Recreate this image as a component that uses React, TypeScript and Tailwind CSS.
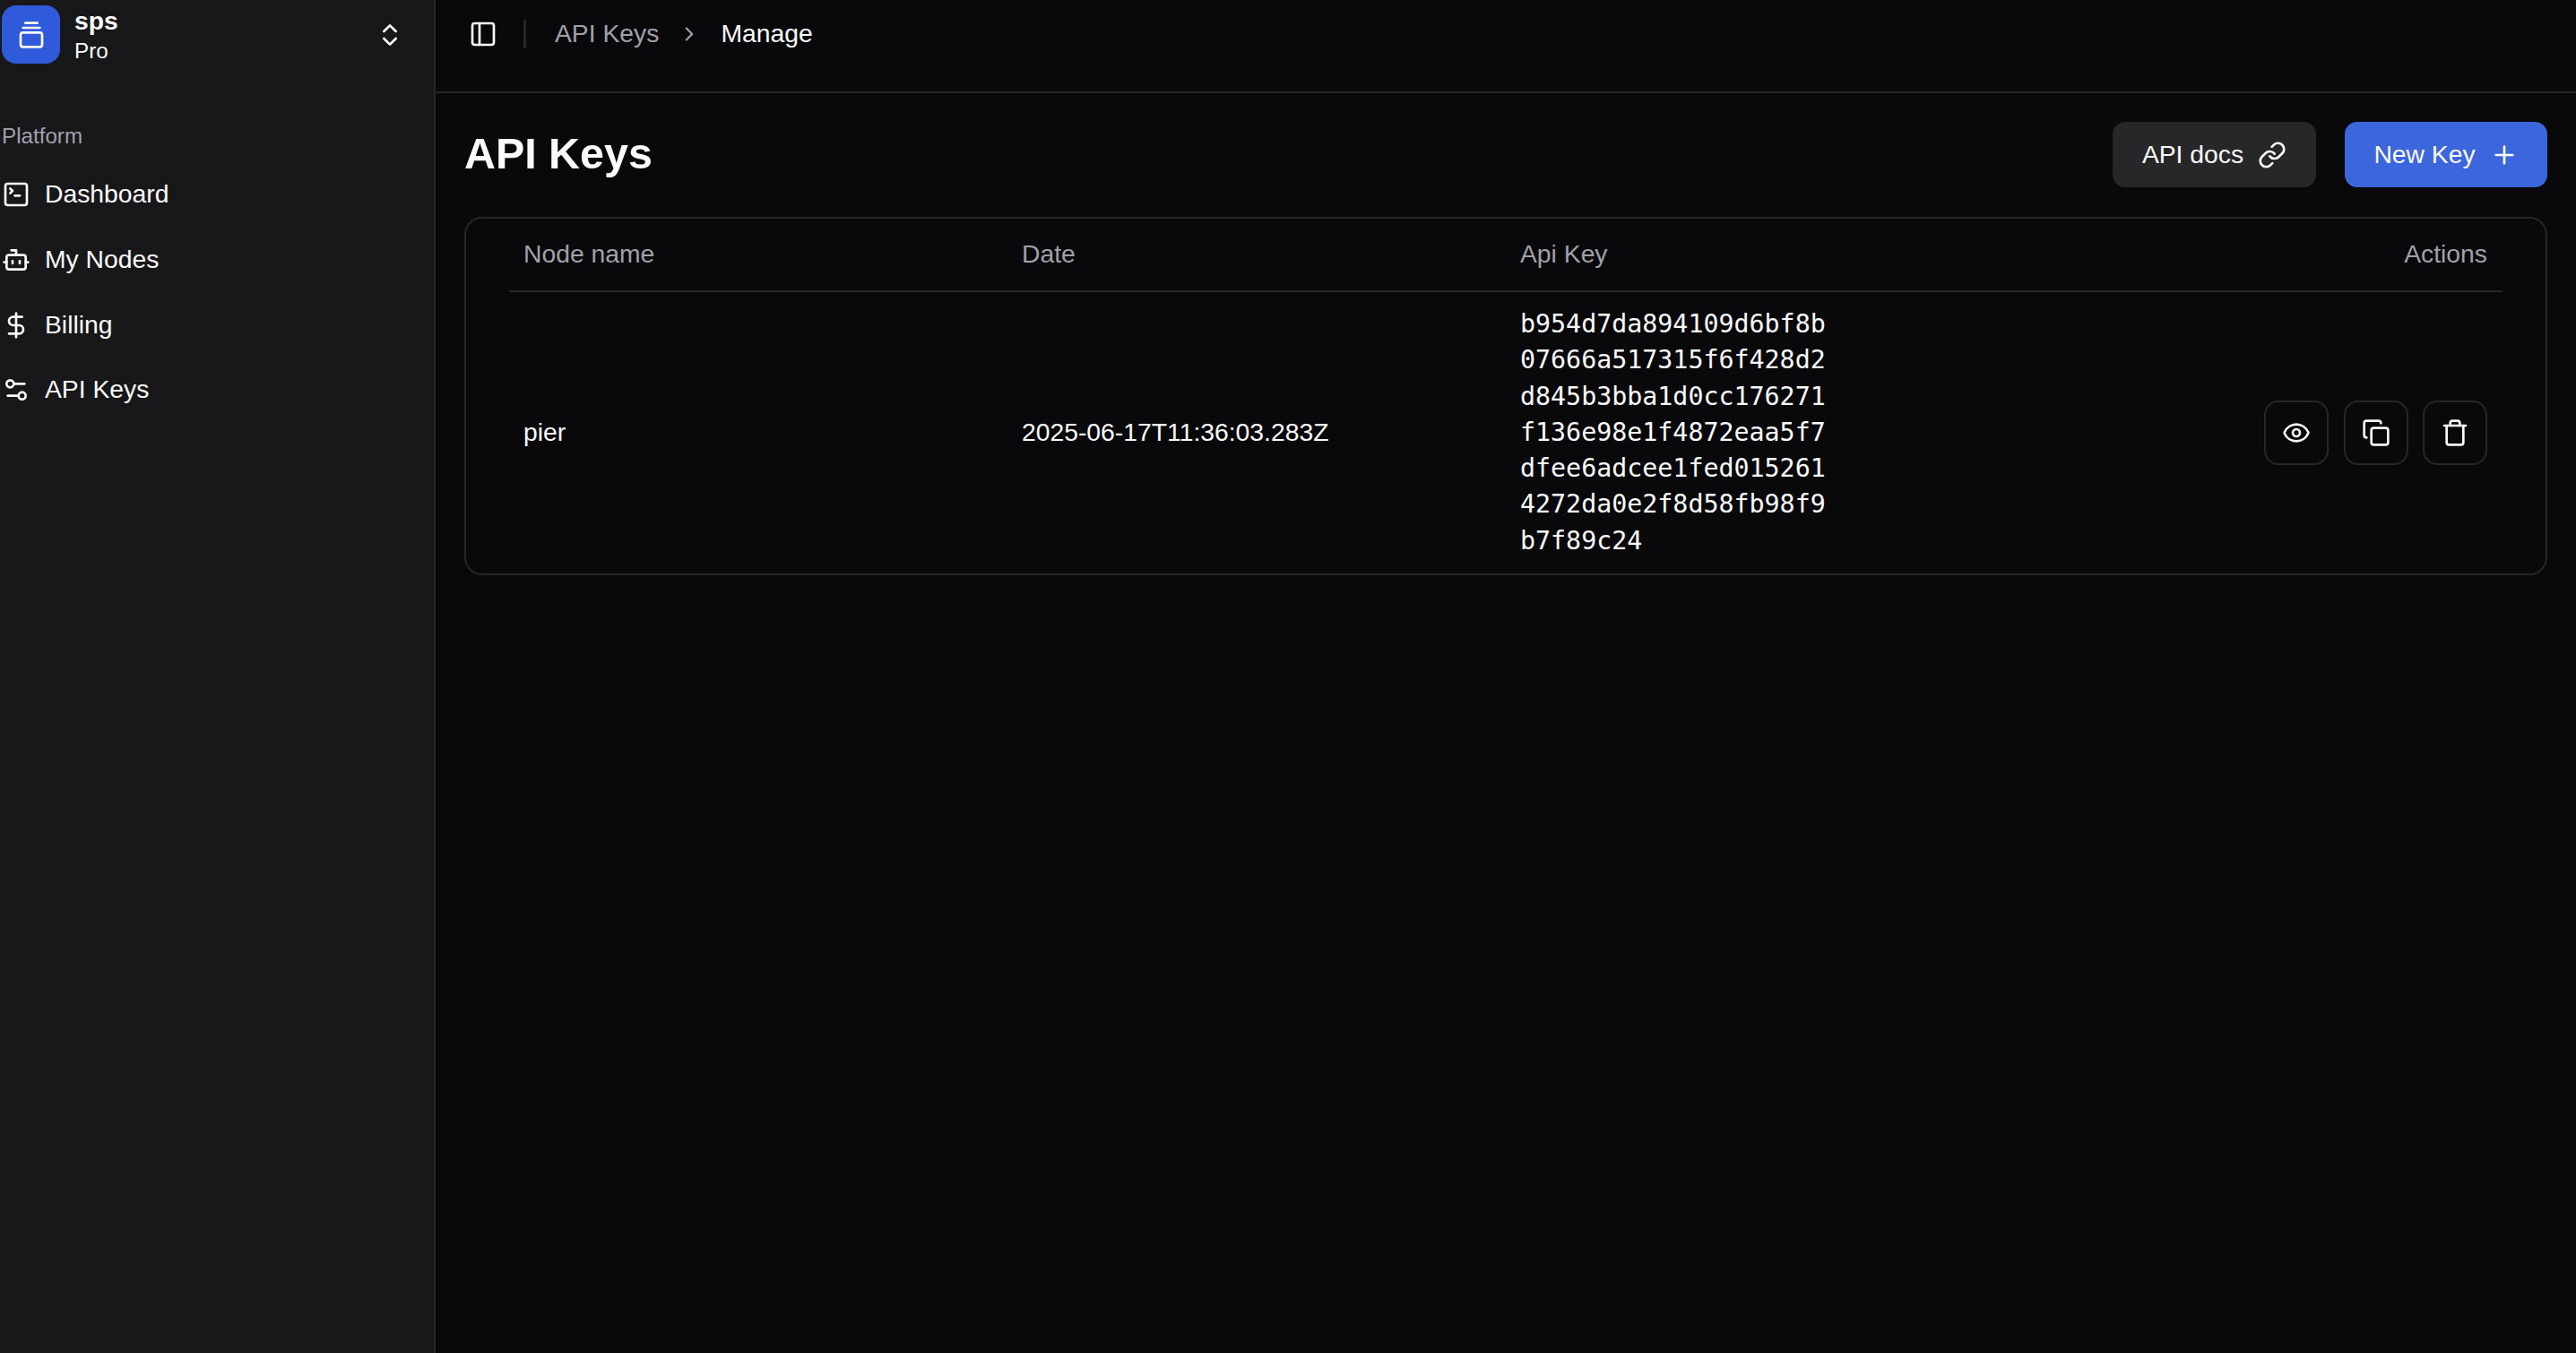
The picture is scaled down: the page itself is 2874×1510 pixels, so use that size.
import {
  Bot,
  ChevronRight,
  ChevronsUpDown,
  Copy,
  DollarSign,
  Eye,
  GalleryVerticalEnd,
  PanelLeft,
  Plus,
  Settings2,
  SquareTerminal,
  Trash,
} from "lucide-react";

const NAV = [
  { label: "Dashboard", icon: SquareTerminal },
  { label: "My Nodes", icon: Bot },
  { label: "Billing", icon: DollarSign },
  { label: "API Keys", icon: Settings2 },
];

const API_KEY =
  "b954d7da894109d6bf8b07666a517315f6f428d2d845b3bba1d0cc176271f136e98e1f4872eaa5f7dfee6adcee1fed0152614272da0e2f8d58fb98f9b7f89c24";

export default function App() {
  return (
    <div className="flex h-screen w-full overflow-hidden bg-[#09090b] font-['Liberation_Sans',Arial,sans-serif] text-[28.3px] leading-[40px] text-[#fafafa]">
      {/* Sidebar */}
      <aside className="flex w-[486px] shrink-0 flex-col border-r-2 border-[#27272a] bg-[#18181b] pl-[2px]">
        <div className="mt-[6px] flex h-[65px] items-center">
          <div className="flex h-[65px] w-[65px] items-center justify-center rounded-[16px] bg-[#2f5bdb]">
            <GalleryVerticalEnd className="h-[32px] w-[32px]" />
          </div>
          <div className="ml-[16px] flex flex-1 flex-col">
            <span className="text-[28.3px] leading-[36px] font-bold">sps</span>
            <span className="text-[24.2px] leading-[32px]">Pro</span>
          </div>
          <ChevronsUpDown className="mr-[33px] h-[32px] w-[32px]" />
        </div>
        <div className="mt-[61px] text-[24.2px] leading-[40px] text-[#a1a1aa]">Platform</div>
        <nav className="mt-[9px] flex flex-col">
          {NAV.map((item) => {
            const Icon = item.icon;
            return (
              <div key={item.label} className="flex h-[72.7px] items-center gap-[16px]">
                <Icon className="h-[32px] w-[32px]" />
                <span className="pb-[2px]">{item.label}</span>
              </div>
            );
          })}
        </nav>
      </aside>

      {/* Main */}
      <div className="flex min-w-0 flex-1 flex-col">
        <header className="flex h-[104px] shrink-0 items-start border-b-2 border-[#27272a] pt-[18px] pl-[37px]">
          <div className="flex h-[40px] items-center">
            <PanelLeft className="h-[32px] w-[32px]" />
            <div className="ml-[29px] h-[32px] w-[3px] bg-[#27272a]" />
            <span className="ml-[32px] pb-[2px] text-[#a1a1aa]">API Keys</span>
            <ChevronRight className="mr-[22px] ml-[21px] h-[26px] w-[26px] text-[#a1a1aa]" />
            <span className="pb-[2px]">Manage</span>
          </div>
        </header>

        <main className="flex-1 px-[32px] pt-[32px]">
          <div className="flex h-[73px] items-center justify-between">
            <h1 className="pb-[3px] text-[48.4px] leading-[60px] font-bold">API Keys</h1>
            <div className="flex gap-[32px]">
              <button className="flex h-[73px] w-[227px] items-center justify-center gap-[16px] rounded-[14px] bg-[#27272a]">
                <span className="pb-[2px]">API docs</span>
                <LinkIcon />
              </button>
              <button className="flex h-[73px] w-[226px] items-center justify-center gap-[16px] rounded-[14px] bg-[#3b66dc]">
                <span className="pb-[2px]">New Key</span>
                <Plus className="h-[32px] w-[32px]" />
              </button>
            </div>
          </div>

          <div className="mt-[33px] rounded-[20px] border-2 border-[#27272a] px-[48px]">
            <table className="w-full table-fixed">
              <thead>
                <tr className="border-b-2 border-[#27272a] text-[#a1a1aa]">
                  <th className="h-[81px] px-[16px] pb-[2px] text-left font-normal">Node name</th>
                  <th className="px-[16px] pb-[2px] text-left font-normal">Date</th>
                  <th className="px-[16px] pb-[2px] text-left font-normal">Api Key</th>
                  <th className="pr-[17px] pb-[2px] pl-[16px] text-right font-normal">Actions</th>
                </tr>
              </thead>
              <tbody>
                <tr>
                  <td className="px-[16px] pb-[2px]">pier</td>
                  <td className="px-[16px] pb-[2px]">2025-06-17T11:36:03.283Z</td>
                  <td className="px-[16px] py-[16px]">
                    <div className="w-[345px] font-['DejaVu_Sans_Mono',monospace] leading-[40.3px] break-all">
                      {API_KEY}
                    </div>
                  </td>
                  <td className="pr-[17px] pl-[16px]">
                    <div className="flex justify-end gap-[16.5px]">
                      <IconButton icon={Eye} />
                      <IconButton icon={Copy} />
                      <IconButton icon={Trash} />
                    </div>
                  </td>
                </tr>
              </tbody>
            </table>
          </div>
        </main>
      </div>
    </div>
  );
}

function LinkIcon() {
  return (
    <svg
      viewBox="0 0 24 24"
      fill="none"
      stroke="currentColor"
      strokeWidth="2"
      strokeLinecap="round"
      strokeLinejoin="round"
      className="h-[32px] w-[32px]"
    >
      <path d="M10 13a5 5 0 0 0 7.54.54l3-3a5 5 0 0 0-7.07-7.07l-1.72 1.71" />
      <path d="M14 11a5 5 0 0 0-7.54-.54l-3 3a5 5 0 0 0 7.07 7.07l1.71-1.71" />
    </svg>
  );
}

function IconButton({ icon: Icon }: { icon: typeof Eye }) {
  return (
    <button className="flex h-[72px] w-[72px] items-center justify-center rounded-[16px] border-2 border-[#27272a]">
      <Icon className="h-[32px] w-[32px]" />
    </button>
  );
}
